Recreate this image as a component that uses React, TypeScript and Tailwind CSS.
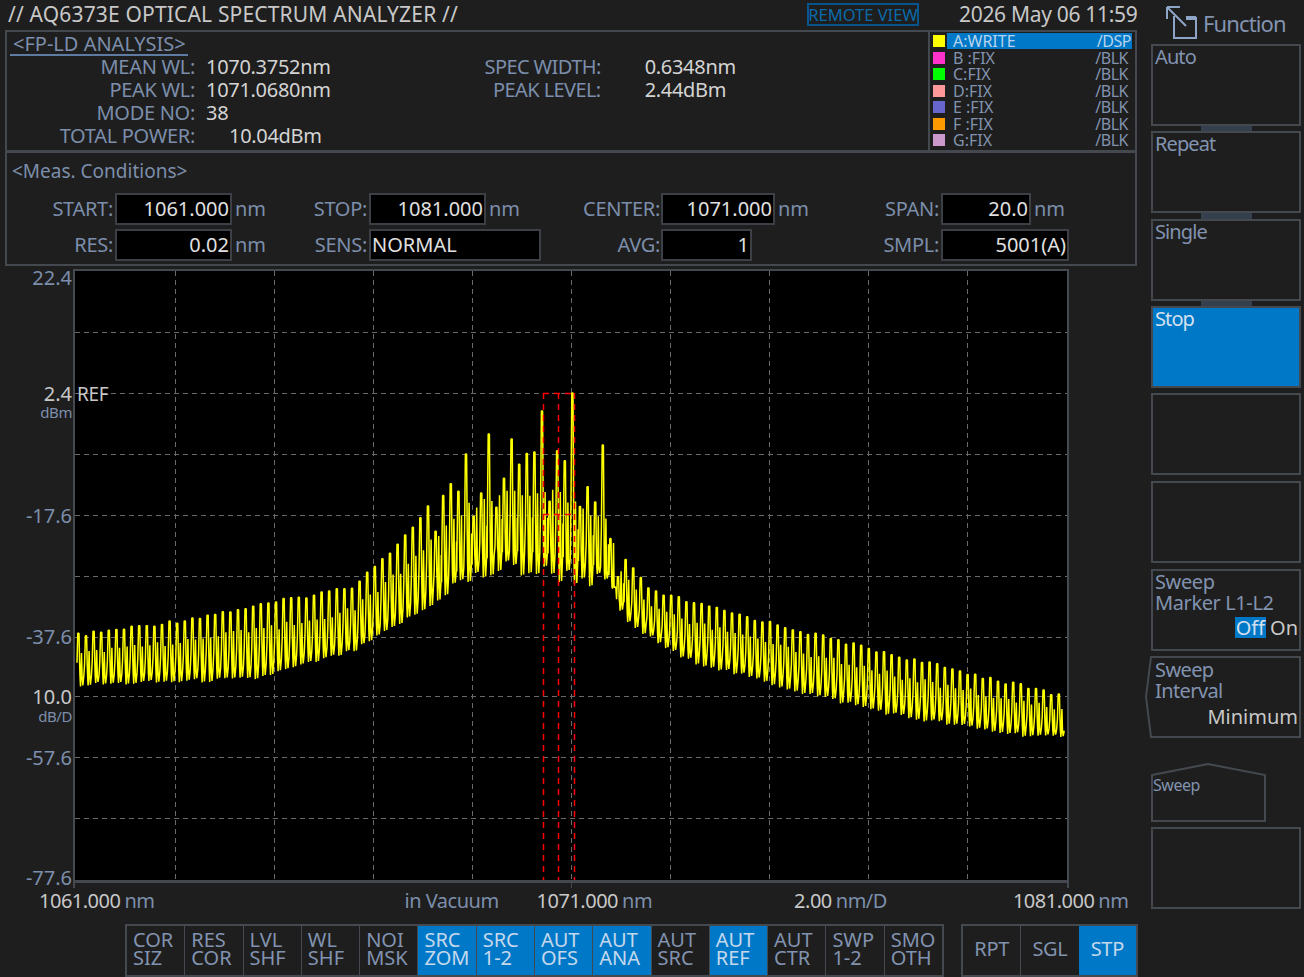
const borderCls = "border-2 border-[#44494f]";

// envelope points taken from the trace: [x, y]
const upperEnv = [[78, 634], [177, 620], [250, 606], [350, 586], [400, 540], [450, 476], [490, 448], [540, 440], [600, 480], [620, 555], [650, 590], [700, 604], [800, 630], [900, 656], [1000, 680], [1066, 696]];
const lowerEnv = [[78, 688], [250, 682], [350, 654], [400, 624], [450, 596], [500, 578], [550, 584], [600, 592], [620, 624], [680, 662], [800, 696], [900, 720], [1000, 736], [1066, 742]];

const lerp = (env: number[][], x: number) => {
  for (let i = 0; i < env.length - 1; i++) {
    if (x <= env[i + 1][0]) {
      const t = (x - env[i][0]) / (env[i + 1][0] - env[i][0]);
      return env[i][1] + (env[i + 1][1] - env[i][1]) * t;
    }
  }
  return env[env.length - 1][1];
};

const rnd = (n: number) => {
  const v = Math.sin(n * 12.9898) * 43758.5453;
  return v - Math.floor(v);
};

// hand placed tall peaks around the centre
const tallPeaks: Record<number, number> = { 466: 455, 489: 435, 512: 440, 543: 412, 574: 394, 605: 446 };

const buildTrace = () => {
  const pts: string[] = [];
  for (let i = 0; i < 130; i++) {
    const x = 77 + i * 7.6;
    const center = x > 430 && x < 620;
    const up = lerp(upperEnv, x);
    const lo = lerp(lowerEnv, x);
    const h = lo - up;
    let top = up + rnd(i) * (center ? 70 : 4);
    for (const k in tallPeaks) {
      if (Math.abs(Number(k) - x) < 3.8) top = tallPeaks[k];
    }
    const bot = lo - rnd(i + 300) * (center ? 18 : 4);
    const knee = top + (lo - top) * 0.55;
    const low = up + h * 0.8;
    const sec = up + h * (0.3 + rnd(i + 600) * 0.1);
    pts.push(
      `${x},${knee}`,
      `${x + 0.8},${top}`,
      `${x + 2},${top}`,
      `${x + 2.6},${knee}`,
      `${x + 3},${low}`,
      `${x + 3.5},${bot}`,
      `${x + 3.9},${low}`,
      `${x + 4.5},${sec}`,
      `${x + 5.1},${low}`,
      `${x + 5.8},${bot - 1}`,
      `${x + 6.8},${low}`
    );
    if (center && i % 2) {
      pts.push(`${x + 7.1},${up + h * 0.55}`, `${x + 7.4},${low}`);
    }
  }
  return pts.join(" ");
};

const traceRows = [
  { name: "A:WRITE", color: "bg-[#ffff00]", end: "/DSP" },
  { name: "B :FIX", color: "bg-[#ff33cc]", end: "/BLK" },
  { name: "C:FIX", color: "bg-[#00ff00]", end: "/BLK" },
  { name: "D:FIX", color: "bg-[#ff9999]", end: "/BLK" },
  { name: "E :FIX", color: "bg-[#6666cc]", end: "/BLK" },
  { name: "F :FIX", color: "bg-[#ff9900]", end: "/BLK" },
  { name: "G:FIX", color: "bg-[#cc99cc]", end: "/BLK" },
];

const funcKeys = [
  ["COR", "SIZ", false],
  ["RES", "COR", false],
  ["LVL", "SHF", false],
  ["WL", "SHF", false],
  ["NOI", "MSK", false],
  ["SRC", "ZOM", true],
  ["SRC", "1-2", true],
  ["AUT", "OFS", true],
  ["AUT", "ANA", true],
  ["AUT", "SRC", false],
  ["AUT", "REF", true],
  ["AUT", "CTR", false],
  ["SWP", "1-2", false],
  ["SMO", "OTH", false],
] as const;

const AnalysisRow = ({ label, value, valueCls = "ml-[11px]" }: { label: string; value: string; valueCls?: string }) => (
  <div className="flex h-[23px] items-center">
    <span className="w-[188px] text-right text-[#7c8eab]">{label}</span>
    <span className={`text-[#d4d4d4] ${valueCls}`}>{value}</span>
  </div>
);

type FieldProps = { label: string; labelW: string; boxW: string; gap: string; value: string; unit?: string; left?: boolean };

const Field = ({ label, labelW, boxW, gap, value, unit, left }: FieldProps) => (
  <div className="flex h-[32px] items-center">
    <span className={`${labelW} shrink-0 text-right text-[#7c8eab]`}>{label}</span>
    <div className={`${gap} ${boxW} flex h-full shrink-0 items-center border-2 border-[#3c4046] bg-black px-[1px] text-[#e0e0e0] tracking-normal ${left ? "justify-start" : "justify-end"}`}>
      {value}
    </div>
    {unit && <span className="ml-[3px] text-[#7c8eab] tracking-normal">{unit}</span>}
  </div>
);

const SoftKey = ({ label, active }: { label?: string; active?: boolean }) => (
  <div className={`h-[82px] ${borderCls} pl-[2px] text-[20px] leading-[22px] tracking-[-0.045em] ${active ? "bg-[#0078c8] text-[#d5e0ee]" : "text-[#8293b0]"}`}>
    {label}
  </div>
);

const Connector = ({ h, on }: { h: string; on?: boolean }) => (
  <div className={`${h} flex justify-center`}>
    {on && <div className="w-[51px] bg-[#34404e]" />}
  </div>
);

const App = () => {
  const verticals = [175.5, 274.5, 373.5, 472.5, 571.5, 670.5, 769.5, 868.5, 967.5];
  const horizontals = [333.5, 394.5, 455.5, 516.5, 577.5, 638.5, 697.5, 758.5, 819.5];
  return (
    <div className="flex h-[977px] w-[1304px] overflow-hidden whitespace-nowrap bg-[#1e1e1e] font-['Noto_Sans',sans-serif] text-[20px] leading-none tracking-[-0.015em]">
      {/* left part */}
      <div className="flex w-[1140px] shrink-0 flex-col pl-[5px]">
        <div className="flex h-[30px] items-center pl-[3px] text-[#c8c8c8]">
          <span className="text-[21px] tracking-[0.008em]">// AQ6373E OPTICAL SPECTRUM ANALYZER //</span>
          <span className="ml-[349px] flex h-[23px] w-[112px] items-center justify-center border-2 border-[#07558a] text-[16.5px] tracking-normal text-[#0a6aaa]">REMOTE VIEW</span>
          <span className="ml-[40px] text-[21px]">2026 May 06 11:59</span>
        </div>

        {/* FP-LD analysis */}
        <div className={`flex h-[123px] w-[1132px] ${borderCls}`}>
          <div className="flex-1">
            <div className="ml-[3px] mt-[1px] h-[23px] w-[178px] border-b-2 border-[#5d7ba3] pl-[3px] text-[20px] leading-[22px] tracking-normal text-[#7c8eab]">&lt;FP-LD ANALYSIS&gt;</div>
            <div className="flex">
              <div className="flex flex-col">
                <AnalysisRow label="MEAN WL:" value="1070.3752nm" />
                <AnalysisRow label="PEAK WL:" value="1071.0680nm" />
                <AnalysisRow label="MODE NO:" value="38" />
                <AnalysisRow label="TOTAL POWER:" value="10.04dBm" valueCls="ml-[34px]" />
              </div>
              <div className="ml-[139px] flex flex-col">
                <div className="flex h-[23px] items-center">
                  <span className="w-[131px] text-right tracking-[-0.03em] text-[#7c8eab]">SPEC WIDTH:</span>
                  <span className="ml-[44px] text-[#d4d4d4]">0.6348nm</span>
                </div>
                <div className="flex h-[23px] items-center">
                  <span className="w-[131px] text-right tracking-[-0.03em] text-[#7c8eab]">PEAK LEVEL:</span>
                  <span className="ml-[44px] text-[#d4d4d4]">2.44dBm</span>
                </div>
              </div>
            </div>
          </div>
          <div className="flex w-[207px] flex-col border-l-2 border-[#44494f] pl-[3px] pt-[1px] text-[16px] tracking-normal">
            {traceRows.map((r, i) => (
              <div key={r.name} className="flex h-[16.5px] items-center">
                <div className={`h-[12px] w-[12px] ${r.color}`} />
                <div className={`ml-[2px] flex h-full w-[185px] items-center justify-between pl-[6px] ${i === 0 ? "bg-[#0078c8] pr-[1px] text-[#b8d4ec]" : "pr-[4px] text-[#8293b0]"}`}>
                  <span>{r.name}</span>
                  <span className="tracking-[-0.03em]">{r.end}</span>
                </div>
              </div>
            ))}
          </div>
        </div>

        {/* measurement conditions */}
        <div className={`-mt-[1px] h-[115px] w-[1132px] ${borderCls} pt-[8px]`}>
          <div className="ml-[5px] h-[32px] text-[19px] leading-[20px] tracking-normal text-[#7c8eab]">&lt;Meas. Conditions&gt;</div>
          <div className="flex">
            <div className="flex w-[254px] flex-col gap-[4px]">
              <Field label="START:" labelW="w-[106px]" boxW="w-[117px]" gap="ml-[2px]" value="1061.000" unit="nm" />
              <Field label="RES:" labelW="w-[106px]" boxW="w-[117px]" gap="ml-[2px]" value="0.02" unit="nm" />
            </div>
            <div className="flex w-[280px] flex-col gap-[4px]">
              <Field label="STOP:" labelW="w-[106px]" boxW="w-[117px]" gap="ml-[2px]" value="1081.000" unit="nm" />
              <Field label="SENS:" labelW="w-[106px]" boxW="w-[172px]" gap="ml-[2px]" value="NORMAL" left />
            </div>
            <div className="flex w-[320px] flex-col gap-[4px]">
              <Field label="CENTER:" labelW="w-[119px]" boxW="w-[114px]" gap="ml-[1px]" value="1071.000" unit="nm" />
              <Field label="AVG:" labelW="w-[119px]" boxW="w-[91px]" gap="ml-[1px]" value="1" />
            </div>
            <div className="flex flex-col gap-[4px]">
              <Field label="SPAN:" labelW="w-[78px]" boxW="w-[90px]" gap="ml-[2px]" value="20.0" unit="nm" />
              <Field label="SMPL:" labelW="w-[78px]" boxW="w-[128px]" gap="ml-[2px]" value="5001(A)" />
            </div>
          </div>
        </div>

        {/* chart with scale */}
        <div className="mt-[3px] flex">
          <div className="flex h-[616px] w-[68px] shrink-0 flex-col items-end pr-[1px] text-[20px] tracking-normal text-[#7c8eab]">
            <div className="mt-[-1px] h-[116px] shrink-0 leading-[20px]">22.4</div>
            <div className="h-[122px] shrink-0 text-right leading-[20px]">
              <div className="text-[#c8c8c8]">2.4</div>
              <div className="-mt-[1px] text-[15px] leading-[18px] tracking-[-0.03em]">dBm</div>
            </div>
            <div className="h-[121px] shrink-0 leading-[20px]">-17.6</div>
            <div className="h-[60px] shrink-0 leading-[20px]">-37.6</div>
            <div className="h-[61px] shrink-0 text-right leading-[20px]">
              <div className="text-[#c8c8c8]">10.0</div>
              <div className="text-[15px] leading-[18px] tracking-[-0.03em]">dB/D</div>
            </div>
            <div className="h-[120px] shrink-0 leading-[20px]">-57.6</div>
            <div className="shrink-0 leading-[20px]">-77.6</div>
          </div>
          <div className="relative h-[614px] w-[996px] border-2 border-b-[3px] border-[#44494f] bg-black">
            <svg viewBox="75 272 992 609" className="h-full w-full" preserveAspectRatio="none">
              {verticals.map((x) => (
                <line key={x} x1={x} y1={272} x2={x} y2={881} stroke="#6a6a6a" strokeWidth={1} strokeDasharray="5 4" />
              ))}
              {horizontals.map((y) => (
                <line key={y} x1={75} y1={y} x2={1067} y2={y} stroke="#6a6a6a" strokeWidth={1} strokeDasharray="5 4" />
              ))}
              <polyline points={buildTrace()} fill="none" stroke="#ffff00" strokeWidth={1.5} strokeLinejoin="bevel" />
              <g stroke="#ff0000" strokeWidth={1.5} strokeDasharray="6 5" fill="none">
                <line x1={543.5} y1={394} x2={543.5} y2={881} />
                <line x1={558.5} y1={394} x2={558.5} y2={881} />
                <line x1={574.5} y1={394} x2={574.5} y2={881} />
                <line x1={543} y1={394.5} x2={575} y2={394.5} />
                <line x1={543} y1={515.5} x2={575} y2={515.5} />
              </g>
            </svg>
            <span className="absolute left-[2px] top-[113px] text-[19px] leading-[20px] text-[#c8c8c8]">REF</span>
            {/* axis ticks below the plot */}
            <div className="absolute -left-[2px] top-[612px] h-[5px] w-[2px] bg-[#44494f]" />
            <div className="absolute left-[496px] top-[612px] h-[5px] w-[1px] bg-[#44494f]" />
            <div className="absolute -right-[2px] top-[612px] h-[5px] w-[2px] bg-[#44494f]" />
          </div>
        </div>

        {/* scale below chart */}
        <div className="mt-[6px] flex h-[20px] items-center pl-[34px] tracking-[-0.025em] text-[#7c8eab]">
          <span className="text-[#c8c8c8]">1061.000</span>
          <span className="ml-[4px]">nm</span>
          <span className="ml-[250px]">in Vacuum</span>
          <span className="ml-[38px] text-[#c8c8c8]">1071.000</span>
          <span className="ml-[4px]">nm</span>
          <span className="ml-[142px] text-[#c8c8c8]">2.00</span>
          <span className="ml-[4px]">nm/D</span>
          <span className="ml-[126px] text-[#c8c8c8]">1081.000</span>
          <span className="ml-[4px]">nm</span>
        </div>

        {/* bottom keys */}
        <div className="mt-[13px] flex pl-[120px]">
          <div className="flex h-[53px] w-[819px] border-2 border-[#44494f]">
            {funcKeys.map(([a, b, on], i) => (
              <div key={i} className={`flex-1 pl-[6px] pt-[5px] text-[20px] leading-[18px] tracking-normal ${i ? "border-l border-[#44494f]" : ""} ${on ? "bg-[#0078c8] text-[#c5d8ec]" : "text-[#8293b0]"}`}>
                <div>{a}</div>
                <div>{b}</div>
              </div>
            ))}
          </div>
          <div className="ml-[17px] flex h-[53px] w-[177px] border-2 border-[#44494f] pb-[3px]">
            <div className="flex flex-1 items-center justify-center text-[#8293b0]">RPT</div>
            <div className="-mb-[3px] flex flex-1 items-center justify-center border-l border-[#44494f] pb-[3px] text-[#8293b0]">SGL</div>
            <div className="-mb-[3px] flex flex-1 items-center justify-center bg-[#0078c8] pb-[3px] text-[#c5d8ec]">STP</div>
          </div>
        </div>
      </div>

      {/* soft keys */}
      <div className="flex w-[164px] flex-col pl-[11px] pr-[3px]">
        <div className="flex h-[44px] items-center pl-[15px]">
          <svg width="34" height="34" viewBox="0 0 34 34" fill="none" stroke="#8fa5c8" strokeWidth="2" className="mt-[2px]">
            <path d="M8 10v22h22V12H20" />
            <path d="M20 12h10" strokeWidth="4" />
            <path d="M1 1h13M1 1v12M1 1l19 19" />
          </svg>
          <span className="ml-[3px] mt-[1px] text-[22px] tracking-[-0.04em] text-[#8293b0]">Function</span>
        </div>
        <SoftKey label="Auto" />
        <Connector h="h-[5px]" on />
        <SoftKey label="Repeat" />
        <Connector h="h-[6px]" on />
        <SoftKey label="Single" />
        <Connector h="h-[5px]" on />
        <SoftKey label="Stop" active />
        <Connector h="h-[5px]" />
        <SoftKey />
        <Connector h="h-[6px]" />
        <SoftKey />
        <Connector h="h-[6px]" />
        <div className={`h-[82px] ${borderCls} pl-[2px] text-[20px] leading-[21px] tracking-[-0.02em] text-[#8293b0]`}>
          <div>Sweep</div>
          <div>Marker L1-L2</div>
          <div className="mt-[4px] flex justify-end pr-[1px] tracking-normal text-[#c8c8c8]">
            <span className="bg-[#0078c8] px-[1px] text-[#d5e0ee]">Off</span>
            <span className="ml-[4px]">On</span>
          </div>
        </div>
        <Connector h="h-[5px]" />
        <div className="relative h-[82px] pl-[4px] pt-[3px] text-[20px] leading-[21px] tracking-[-0.03em] text-[#8293b0]">
          <svg className="absolute -left-[7px] top-0" width="157" height="82" fill="none" stroke="#44494f" strokeWidth="2">
            <path d="M7 1H156V81H7L2 41Z" />
          </svg>
          <div>Sweep</div>
          <div>Interval</div>
          <div className="mt-[5px] pr-[3px] text-right tracking-normal text-[#c8c8c8]">Minimum</div>
        </div>
        <div className="relative mt-[25px] h-[58px] w-[115px] pl-[2px] pt-[13px] text-[16px] leading-[18px] tracking-[-0.03em] text-[#8293b0]">
          <svg className="absolute left-0 top-0" width="115" height="59" fill="none" stroke="#44494f" strokeWidth="2">
            <path d="M1 12L57 1L114 12V58H1Z" />
          </svg>
          Sweep
        </div>
        <div className="mt-[6px]">
          <SoftKey />
        </div>
      </div>
    </div>
  );
};

export default App;
